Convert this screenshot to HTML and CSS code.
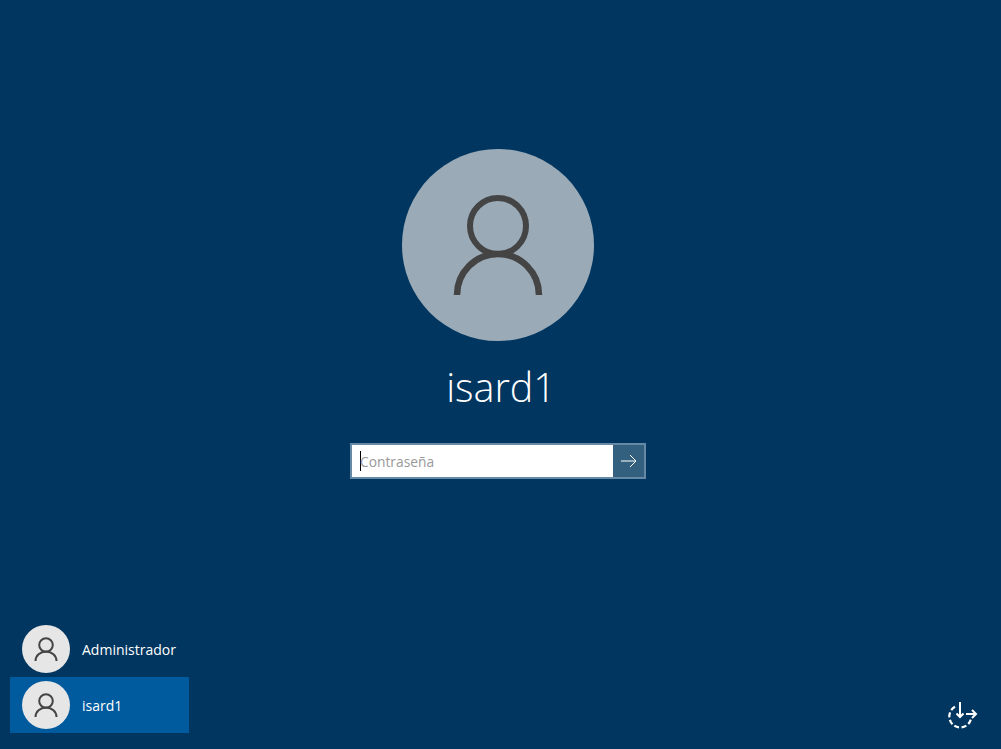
FILE: index.html
```html
<!DOCTYPE html>
<html lang="es">
<head>
  <meta charset="UTF-8" />
  <meta name="viewport" content="width=device-width, initial-scale=1.0"/>
  <title>Login</title>
  <link rel="stylesheet" href="styles.css">
</head>
<body>

<div class="screen">
  <div class="login">
    <div class="avatar-big">
      <svg width="192" height="192" viewBox="0 0 192 192">
        <circle cx="96" cy="77" r="28" fill="none" stroke="#444" stroke-width="6"/>
        <path d="M55 146 A41 41 0 0 1 137 146" fill="none" stroke="#444" stroke-width="6.5"/>
      </svg>
    </div>
    <div class="username">isard1</div>
    <form class="pass-box">
      <div class="pass-field">
        <span class="caret"></span>
        <span class="placeholder">Contraseña</span>
      </div>
      <div class="pass-btn">
        <svg width="16" height="14" viewBox="0 0 16 14">
          <path d="M0 7 H15 M9 1 L15 7 L9 13" fill="none" stroke="#fff" stroke-width="1"/>
        </svg>
      </div>
    </form>
  </div>

  <div class="bottom">
    <div class="users">
      <div class="user-row">
        <div class="avatar-small">
          <svg width="48" height="48" viewBox="0 0 48 48">
            <circle cx="24" cy="20" r="6.8" fill="none" stroke="#444" stroke-width="2"/>
            <path d="M13.5 36 A10.5 9.5 0 0 1 34.5 36" fill="none" stroke="#444" stroke-width="2"/>
          </svg>
        </div>
        <span>Administrador</span>
      </div>
      <div class="user-row selected">
        <div class="avatar-small">
          <svg width="48" height="48" viewBox="0 0 48 48">
            <circle cx="24" cy="20" r="6.8" fill="none" stroke="#444" stroke-width="2"/>
            <path d="M13.5 36 A10.5 9.5 0 0 1 34.5 36" fill="none" stroke="#444" stroke-width="2"/>
          </svg>
        </div>
        <span>isard1</span>
      </div>
    </div>
    <div class="ease">
      <svg width="34" height="30" viewBox="0 0 34 30">
        <path d="M11 6.8 A11 11 0 1 0 27 19" fill="none" stroke="#fff" stroke-width="2.2" stroke-dasharray="5 2.5"/>
        <path d="M16 2 V17 M12.5 13.5 L16 17 L19.5 13.5" fill="none" stroke="#fff" stroke-width="2"/>
        <path d="M22 14 H31.5 M28 10 L32 14 L28 18" fill="none" stroke="#fff" stroke-width="2"/>
      </svg>
    </div>
  </div>
</div>

</body>
</html>
```

FILE: styles.css
```css
* {
  margin: 0;
  padding: 0;
  box-sizing: border-box;
}
body {
  height: 749px;
  overflow: hidden;
  font-family: 'Open Sans', 'Noto Sans', sans-serif;
  background-color: #00365f;
  color: #fff;
}
.screen {
  height: 100%;
  display: flex;
  flex-direction: column;
  justify-content: space-between;
}
.login {
  padding: 149px 5px 0 0;
  display: flex;
  flex-direction: column;
  align-items: center;
}
.avatar-big {
  width: 192px;
  height: 192px;
  border-radius: 50%;
  background-color: #9aaab7;
}
.avatar-big svg {
  display: block;
}
.username {
  margin-top: 16px;
  padding-left: 6px;
  font-size: 39.5px;
  font-weight: 300;
  line-height: 60px;
}
.pass-box {
  margin-top: 26px;
  width: 296px;
  height: 36px;
  display: flex;
  border: 2px solid #668aa5;
}
.pass-field {
  flex: 1;
  display: flex;
  align-items: center;
  padding-left: 8px;
  background-color: #fff;
  color: #999;
  font-size: 13.8px;
}
.caret {
  width: 1px;
  height: 20px;
  margin-right: -1px;
  background-color: #000;
}
.pass-btn {
  width: 31px;
  display: flex;
  align-items: center;
  justify-content: center;
  background-color: #33607f;
}
.bottom {
  display: flex;
  justify-content: space-between;
  align-items: flex-end;
  padding: 0 23px 16px 10px;
}
.users {
  width: 179px;
}
.user-row {
  height: 56px;
  padding: 0 12px;
  display: flex;
  align-items: center;
  gap: 12px;
  font-size: 14px;
}
.user-row.selected {
  background-color: #005a9e;
}
.avatar-small {
  width: 48px;
  height: 48px;
  border-radius: 50%;
  background-color: #e6e6e6;
}
.avatar-small svg {
  display: block;
}
.ease {
  margin-bottom: 3px;
}
.ease svg {
  display: block;
}
```
